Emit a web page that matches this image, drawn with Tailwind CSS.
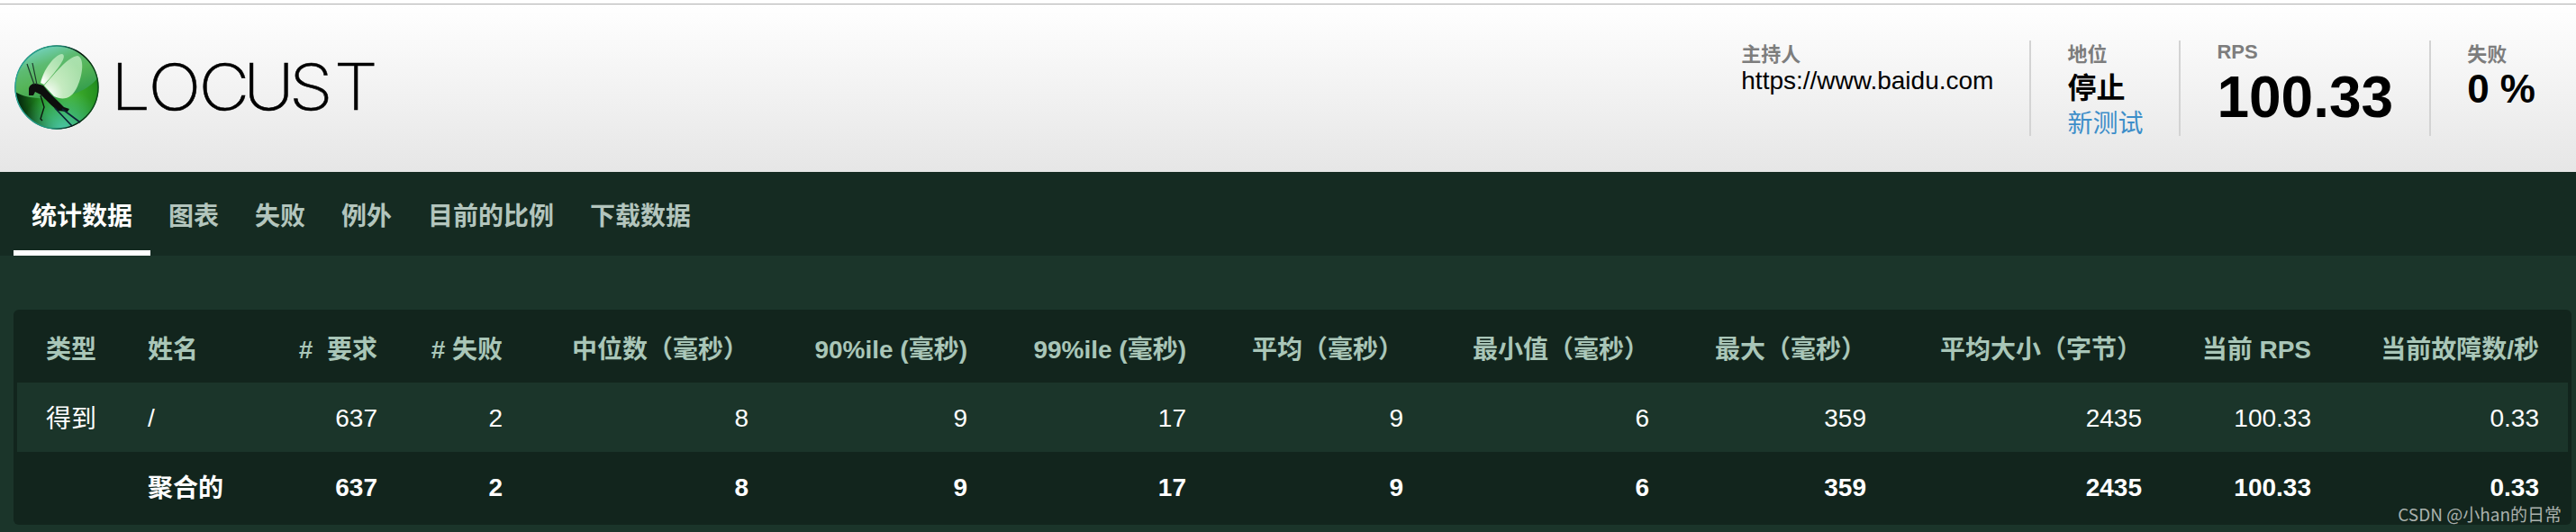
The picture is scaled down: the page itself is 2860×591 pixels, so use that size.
<!DOCTYPE html>
<html lang="zh-CN">
<head>
  <meta charset="UTF-8" />
  <meta name="viewport" content="width=device-width, initial-scale=1.0"/>
  <title>Locust</title>
  <script src="https://cdn.jsdelivr.net/npm/@tailwindcss/browser@4"></script>
</head>
<body class="bg-[#1b352a] h-[591px] overflow-hidden font-['Liberation_Sans','Noto_Sans_CJK_SC',sans-serif] text-[28px] leading-[32px] text-white">
  <div class="h-1 bg-white"></div>
  <header class="h-[187px] border-t border-[#b0b0b0] bg-linear-to-b from-white to-[#e6e6e6] text-black flex justify-between">
    <svg class="w-[440px] h-[186px]" viewBox="0 5 440 186">
      <defs>
        <linearGradient id="ball" x1="0.15" y1="0" x2="0.7" y2="1">
          <stop offset="0" stop-color="#7ad9d6"/>
          <stop offset="0.35" stop-color="#5dbb72"/>
          <stop offset="0.6" stop-color="#55b457"/>
          <stop offset="1" stop-color="#2f9a4c"/>
        </linearGradient>
        <radialGradient id="shade" cx="0.65" cy="0.6" r="0.62">
          <stop offset="0" stop-color="#45b32f"/>
          <stop offset="0.55" stop-color="#23901f"/>
          <stop offset="1" stop-color="#03260c"/>
        </radialGradient>
        <radialGradient id="glow" cx="0.58" cy="1.02" r="0.5">
          <stop offset="0" stop-color="#4cc9ae"/>
          <stop offset="1" stop-color="#4cc9a0" stop-opacity="0"/>
        </radialGradient>
        <linearGradient id="rim" x1="0" y1="0.2" x2="1" y2="0.3">
          <stop offset="0" stop-color="#2aa79a"/>
          <stop offset="0.5" stop-color="#1d8f78"/>
          <stop offset="0.75" stop-color="#04140c"/>
          <stop offset="1" stop-color="#0d4a1c"/>
        </linearGradient>
        <radialGradient id="wing" cx="0.1" cy="0.9" r="1">
          <stop offset="0" stop-color="#fff"/>
          <stop offset="0.4" stop-color="#d4f2cd" stop-opacity="0.9"/>
          <stop offset="1" stop-color="#c4eec4" stop-opacity="0.75"/>
        </radialGradient>
      </defs>
      <circle cx="63" cy="97" r="46.5" fill="url(#shade)"/>
      <circle cx="63" cy="97" r="46.5" fill="url(#glow)"/>
      <path d="M17 102A46.2 46.2 0 0 1 108 87C98 100 78 108 58 109C40 110 26 108 17 102Z" fill="url(#ball)"/>
      <circle cx="63" cy="97" r="46" fill="none" stroke="url(#rim)" stroke-width="1.4"/>
      <path d="M45 92C48 78 60 61 69 60C75 62 66 75 49 94Z" fill="url(#wing)"/>
      <path d="M49 95C60 83 75 63 86 62C94 64 92 83 86 96C80 110 70 112 60 107Z" fill="url(#wing)"/>
      <path d="M32 106L32 98C33 94 37 92 41 93L48 95C53 102 60 108 66 114L71 119L77 121L75 124L64 123C58 118 50 110 45 105L39 102L37 106Z" fill="#0d0f0d"/>
      <path d="M38 94L30 71M41 94L36 70" stroke="#1d3a2b" stroke-width="1.2" fill="none"/>
      <path d="M45 106L49 119L45 132L47 134" stroke="#0d150d" stroke-width="1.4" fill="none"/>
      <path d="M61 120L80 140M69 121L89 136" stroke="#0d2236" stroke-width="1.7" fill="none"/>
      <text y="122" x="111.8 149.5 200.5 245.5 291.8 337" transform="scale(1.1 1)" stroke="#000" stroke-width="0.5" class="font-['Inter'] font-extralight text-[71px]">LOCUST</text>
    </svg>
    <div class="flex pt-10 pr-[5px] h-[146px]">
      <div class="px-10 border-r-2 border-[#d3d3d3]">
        <div class="text-[22px] leading-[26px] font-bold text-[#7d7d7d] pt-[3px]">主持人</div>
        <div class="leading-[32px]">https://www.baidu.com</div>
      </div>
      <div class="px-10 border-r-2 border-[#d3d3d3]">
        <div class="text-[22px] leading-[26px] font-bold text-[#7d7d7d] pt-[3px]">地位</div>
        <div class="text-[32px] leading-[44px] font-bold pt-[2px]">停止</div>
        <a class="block leading-[34px] text-[#3d8ec9] pt-px">新测试</a>
      </div>
      <div class="px-10 border-r-2 border-[#d3d3d3]">
        <div class="text-[22px] leading-[26px] font-bold text-[#7d7d7d]">RPS</div>
        <div class="text-[64px] leading-[74px] font-bold">100.33</div>
      </div>
      <div class="px-10">
        <div class="text-[22px] leading-[26px] font-bold text-[#7d7d7d] pt-[3px]">失败</div>
        <div class="text-[44px] leading-[50px] font-bold">0 %</div>
      </div>
    </div>
  </header>

  <nav class="h-[93px] bg-[#152b22] pl-[15px] flex font-bold text-[#b3c5bd] leading-[99px]">
    <a class="px-5 h-[93px] border-b-[6px] border-white text-white">统计数据</a>
    <a class="px-5">图表</a>
    <a class="px-5">失败</a>
    <a class="px-5">例外</a>
    <a class="px-5">目前的比例</a>
    <a class="px-5">下载数据</a>
  </nav>

  <main class="relative pt-[60px] pl-[15px]">
    <div class="w-[2840px] h-[239px] p-1 rounded-md bg-[#12251d]">
      <table class="table-fixed w-[2832px] text-right whitespace-nowrap">
        <colgroup>
          <col class="w-[113px]"><col class="w-[152px]"><col class="w-[167px]"><col class="w-[139px]"><col class="w-[273px]"><col class="w-[243px]"><col class="w-[243px]"><col class="w-[241px]"><col class="w-[273px]"><col class="w-[241px]"><col class="w-[306px]"><col class="w-[188px]"><col class="w-[253px]">
        </colgroup>
        <thead>
          <tr class="h-[77px] text-[#a9c6b8] font-bold">
            <th class="pt-[5px] pl-8 text-left">类型</th>
            <th class="pt-[5px] pl-8 text-left">姓名</th>
            <th class="pt-[5px] pr-8"># &nbsp;要求</th>
            <th class="pt-[5px] pr-8"># 失败</th>
            <th class="pt-[5px] pr-8">中位数（毫秒）</th>
            <th class="pt-[5px] pr-8">90%ile (毫秒)</th>
            <th class="pt-[5px] pr-8">99%ile (毫秒)</th>
            <th class="pt-[5px] pr-8">平均（毫秒）</th>
            <th class="pt-[5px] pr-8">最小值（毫秒）</th>
            <th class="pt-[5px] pr-8">最大（毫秒）</th>
            <th class="pt-[5px] pr-8">平均大小（字节）</th>
            <th class="pt-[5px] pr-8">当前 RPS</th>
            <th class="pt-[5px] pr-8">当前故障数/秒</th>
          </tr>
        </thead>
        <tbody>
          <tr class="h-[77px] bg-[#1b352a]">
            <td class="pt-1 pl-8 text-left">得到</td>
            <td class="pt-[2px] pl-8 text-left">/</td>
            <td class="pt-[2px] pr-8">637</td>
            <td class="pt-[2px] pr-8">2</td>
            <td class="pt-[2px] pr-8">8</td>
            <td class="pt-[2px] pr-8">9</td>
            <td class="pt-[2px] pr-8">17</td>
            <td class="pt-[2px] pr-8">9</td>
            <td class="pt-[2px] pr-8">6</td>
            <td class="pt-[2px] pr-8">359</td>
            <td class="pt-[2px] pr-8">2435</td>
            <td class="pt-[2px] pr-8">100.33</td>
            <td class="pt-[2px] pr-8">0.33</td>
          </tr>
          <tr class="h-[77px] font-bold">
            <td></td>
            <td class="pt-1 pl-8 text-left">聚合的</td>
            <td class="pt-[2px] pr-8">637</td>
            <td class="pt-[2px] pr-8">2</td>
            <td class="pt-[2px] pr-8">8</td>
            <td class="pt-[2px] pr-8">9</td>
            <td class="pt-[2px] pr-8">17</td>
            <td class="pt-[2px] pr-8">9</td>
            <td class="pt-[2px] pr-8">6</td>
            <td class="pt-[2px] pr-8">359</td>
            <td class="pt-[2px] pr-8">2435</td>
            <td class="pt-[2px] pr-8">100.33</td>
            <td class="pt-[2px] pr-8">0.33</td>
          </tr>
        </tbody>
      </table>
    </div>
    <div class="absolute right-4 top-[275px] font-['Noto_Sans_CJK_SC',sans-serif] text-[19px] leading-[24px] text-[#aab1ad]">CSDN @小han的日常</div>
  </main>
</body>
</html>
